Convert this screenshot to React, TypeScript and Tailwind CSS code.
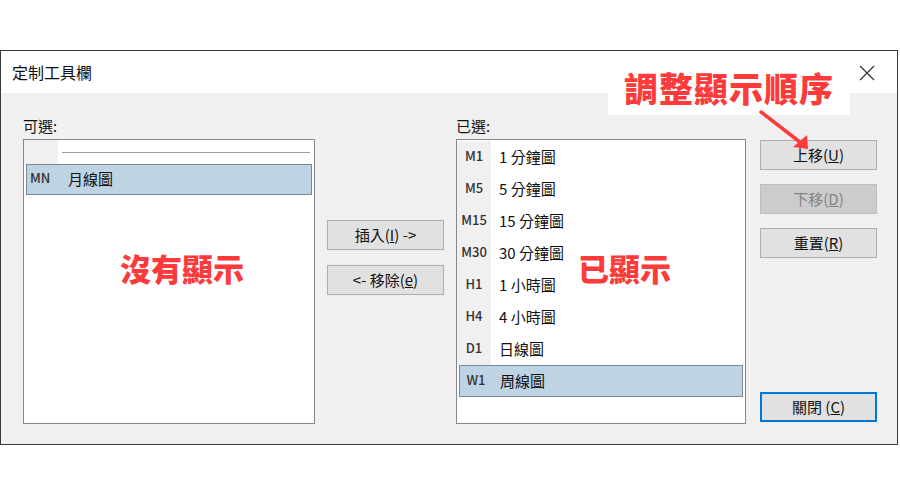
import React from "react";

const font = { fontFamily: '"Noto Sans CJK TC", "Noto Sans", sans-serif' };

type Row = { code: string; name: string; selected?: boolean };

const shown: Row[] = [
  { code: "M1", name: "1 分鐘圖" },
  { code: "M5", name: "5 分鐘圖" },
  { code: "M15", name: "15 分鐘圖" },
  { code: "M30", name: "30 分鐘圖" },
  { code: "H1", name: "1 小時圖" },
  { code: "H4", name: "4 小時圖" },
  { code: "D1", name: "日線圖" },
  { code: "W1", name: "周線圖", selected: true },
];

function ListRow({ row }: { row: Row }) {
  if (row.selected) {
    return (
      <div className="mx-[2px] flex h-[32px] items-center border border-[#7f8891] bg-[#bed3e4]">
        <span className="w-[32px] pb-[3px] text-center text-[13px] font-medium text-[#333]">{row.code}</span>
        <span className="pl-[8px] text-[15px] text-[#111]">{row.name}</span>
      </div>
    );
  }
  return (
    <div className="flex h-[32px] items-center">
      <span className="flex h-full w-[34px] items-center justify-center bg-[#f0f0f0] pb-[3px] text-[13px] font-medium text-[#333]">
        {row.code}
      </span>
      <span className="pl-[8px] text-[15px] text-[#111]">{row.name}</span>
    </div>
  );
}

function Btn({
  children,
  disabled,
  focused,
}: {
  children: React.ReactNode;
  disabled?: boolean;
  focused?: boolean;
}) {
  const cls = disabled
    ? "border-[#bfbfbf] bg-[#cccccc] text-[#838383]"
    : focused
      ? "border-2 border-[#0078d7] bg-[#e1e1e1] text-[#111]"
      : "border-[#adadad] bg-[#e1e1e1] text-[#111]";
  return (
    <div
      className={`flex h-[30px] w-[117px] items-center justify-center border text-[15px] ${cls}`}
    >
      {children}
    </div>
  );
}

export default function App() {
  return (
    <div className="relative h-[500px] w-[900px] overflow-hidden bg-white" style={font}>
      <div className="pt-[50px]">
        <div className="h-[395px] w-[898px] border border-[#3a3a3a] bg-white">
          {/* title bar */}
          <div className="flex h-[42px] items-center justify-between pl-[11px] pr-[22px]">
            <span className="text-[16px] text-[#111]">定制工具欄</span>
            <svg width="16" height="16" viewBox="0 0 16 16" className="mt-[1px]">
              <path d="M1 1 L15 15 M15 1 L1 15" stroke="#333" strokeWidth="1.2" />
            </svg>
          </div>

          {/* body */}
          <div className="flex h-[351px] bg-[#f0f0f0] pl-[22px] pt-[24px]">
            {/* available */}
            <div className="flex w-[292px] flex-col">
              <div className="flex h-[22px] items-start text-[15px] leading-[18px] text-[#111]">可選:</div>
              <div className="h-[285px] border border-[#828790] bg-white">
                <div className="flex h-[24px]">
                  <div className="w-[34px] bg-[#f0f0f0]" />
                  <div className="flex flex-1 items-center pl-[4px] pr-[4px]">
                    <div className="h-px w-full bg-[#a0a0a0]" />
                  </div>
                </div>
                <div className="mx-[2px] flex h-[31px] items-center border border-[#7f8891] bg-[#bed3e4]">
                  <span className="w-[36px] pb-[3px] pl-[3px] text-[13px] font-medium text-[#333]">MN</span>
                  <span className="pl-[5px] text-[15px] text-[#111]">月線圖</span>
                </div>
              </div>
            </div>

            {/* middle buttons */}
            <div className="ml-[12px] flex flex-col gap-[15px] pt-[103px]">
              <Btn>
                插入(<span className="underline">I</span>) -&gt;
              </Btn>
              <Btn>
                &lt;- 移除(<span className="underline">e</span>)
              </Btn>
            </div>

            {/* shown */}
            <div className="ml-[12px] flex w-[290px] flex-col">
              <div className="flex h-[22px] items-start text-[15px] leading-[18px] text-[#111]">已選:</div>
              <div className="h-[285px] border border-[#828790] bg-white pt-[1px]">
                {shown.map((r) => (
                  <ListRow key={r.code} row={r} />
                ))}
              </div>
            </div>

            {/* right buttons */}
            <div className="ml-[14px] flex flex-col pt-[23px]">
              <div className="flex flex-col gap-[14px]">
                <Btn>
                  上移(<span className="underline">U</span>)
                </Btn>
                <Btn disabled>
                  下移(<span className="underline">D</span>)
                </Btn>
                <Btn>
                  重置(<span className="underline">R</span>)
                </Btn>
              </div>
              <div className="mt-[134px]">
                <Btn focused>
                  關閉 (<span className="underline">C</span>)
                </Btn>
              </div>
            </div>
          </div>
        </div>
      </div>

      {/* annotations */}
      <div className="absolute left-[608px] top-[60px] flex h-[55px] w-[242px] items-center justify-center bg-white">
        <span className="text-[34px] font-black leading-none tracking-[1px] text-[#fe3a3a]">調整顯示順序</span>
      </div>
      <svg className="absolute left-[755px] top-[108px]" width="60" height="45" viewBox="0 0 60 45">
        <path d="M6 4 L50 38" stroke="#fe3a3a" strokeWidth="3.5" strokeLinecap="round" />
        <path d="M53 41 L38 39 L52 27 Z" fill="#fe3a3a" />
      </svg>
      <div className="absolute left-[120px] top-[252px] text-[31px] font-black leading-none text-[#fe3a3a]">
        沒有顯示
      </div>
      <div className="absolute left-[578px] top-[252px] text-[31px] font-black leading-none text-[#fe3a3a]">
        已顯示
      </div>
    </div>
  );
}
